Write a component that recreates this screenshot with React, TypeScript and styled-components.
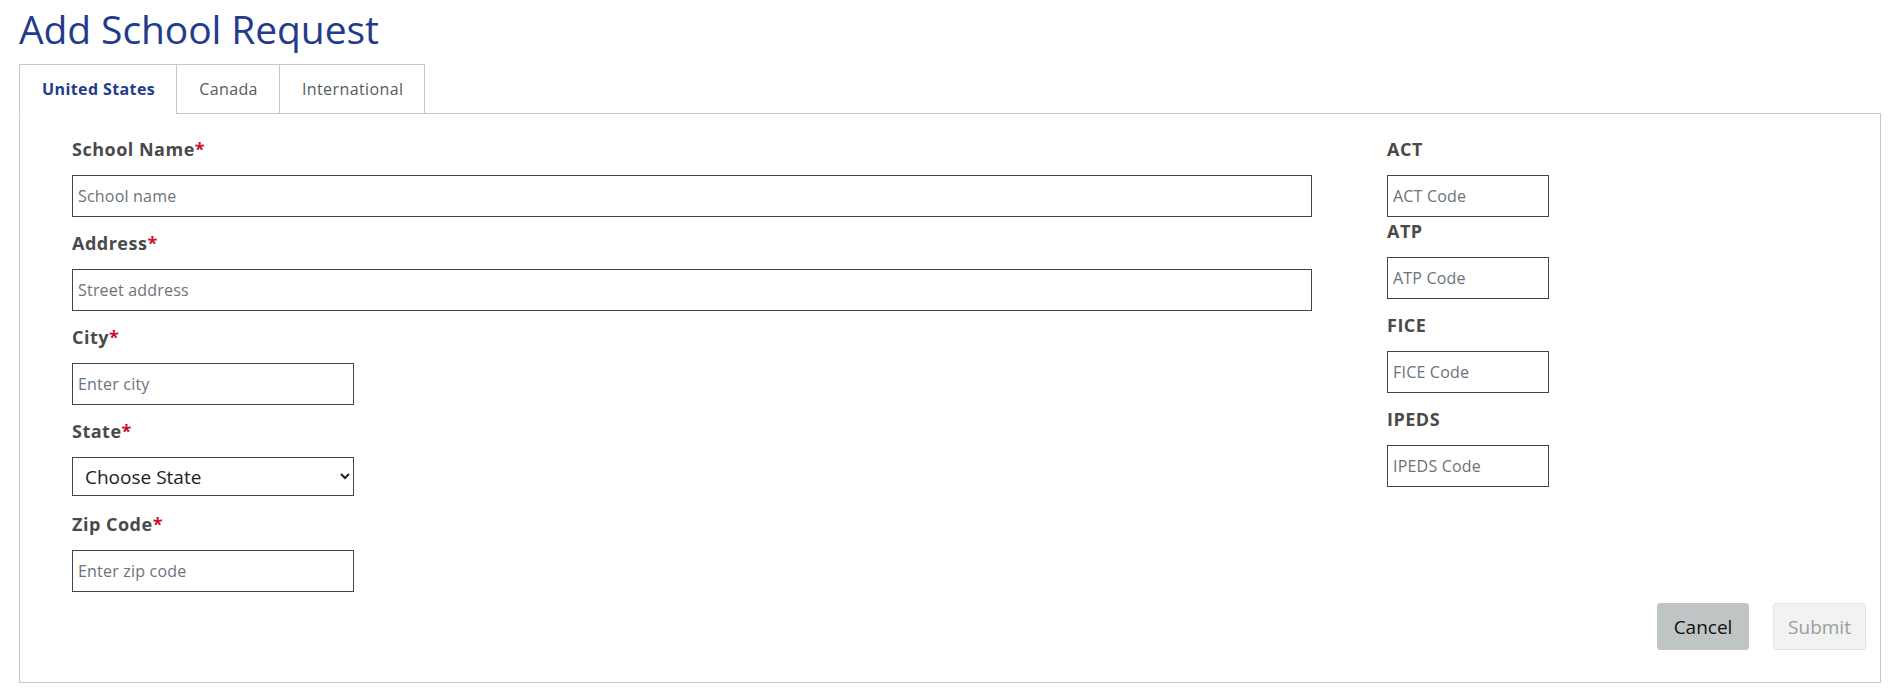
import styled, { createGlobalStyle } from "styled-components";

const GlobalStyle = createGlobalStyle`
  body {
    margin: 0;
    background: #ffffff;
    font-family: "Open Sans", Lato, Arial, sans-serif;
  }
`;

type Field = {
  label: string;
  placeholder: string;
  required?: boolean;
  width?: string;
  gapAfter?: number;
};

const mainFields: Field[] = [
  { label: "School Name", placeholder: "School name", required: true },
  { label: "Address", placeholder: "Street address", required: true },
  { label: "City", placeholder: "Enter city", required: true, width: "282px" },
];

const codeFields: Field[] = [
  { label: "ACT", placeholder: "ACT Code", gapAfter: 3 },
  { label: "ATP", placeholder: "ATP Code" },
  { label: "FICE", placeholder: "FICE Code" },
  { label: "IPEDS", placeholder: "IPEDS Code" },
];

const tabs = ["United States", "Canada", "International"];

function FormField({ field }: { field: Field }) {
  return (
    <Group $gap={field.gapAfter ?? 15}>
      <Label>
        {field.label}
        {field.required && <Star>*</Star>}
      </Label>
      <TextInput type="text" placeholder={field.placeholder} $width={field.width} />
    </Group>
  );
}

export default function App() {
  return (
    <Page>
      <GlobalStyle />
      <Title>Add School Request</Title>
      <TabBar>
        {tabs.map((t, i) => (
          <Tab key={t} $active={i === 0}>
            {t}
          </Tab>
        ))}
        <TabFiller />
      </TabBar>
      <Panel>
        <Columns>
          <Column>
            {mainFields.map((f) => (
              <FormField key={f.label} field={f} />
            ))}
            <Group $gap={17}>
              <Label>
                State<Star>*</Star>
              </Label>
              <StateSelect defaultValue="">
                <option value="">Choose State</option>
              </StateSelect>
            </Group>
            <Group $gap={0}>
              <Label>
                Zip Code<Star>*</Star>
              </Label>
              <TextInput type="text" placeholder="Enter zip code" $width="282px" />
            </Group>
          </Column>
          <Column>
            {codeFields.map((f) => (
              <FormField key={f.label} field={{ ...f, width: "162px" }} />
            ))}
          </Column>
        </Columns>
        <Footer>
          <CancelButton>Cancel</CancelButton>
          <SubmitButton disabled>Submit</SubmitButton>
        </Footer>
      </Panel>
    </Page>
  );
}

const Page = styled.div`
  padding: 0 11px 9px 19px;
`;

const Title = styled.h1`
  margin: 0;
  padding-top: 5px;
  height: 59px;
  font-size: 39px;
  line-height: 47px;
  font-weight: 400;
  letter-spacing: -0.1px;
  color: #243b8c;
`;

const TabBar = styled.div`
  display: flex;
  height: 50px;
`;

const Tab = styled.div<{ $active?: boolean }>`
  display: flex;
  align-items: center;
  padding: 0 21px 0 22px;
  border: 1px solid #c4c8c8;
  border-bottom-color: ${(p) => (p.$active ? "#ffffff" : "#c4c8c8")};
  margin-left: -1px;
  background: #ffffff;
  font-size: 16px;
  letter-spacing: 0.4px;
  font-weight: ${(p) => (p.$active ? 700 : 400)};
  color: ${(p) => (p.$active ? "#243b8c" : "#555a5c")};
  &:first-child {
    margin-left: 0;
  }
`;

const TabFiller = styled.div`
  flex: 1;
  border-bottom: 1px solid #c4c8c8;
`;

const Panel = styled.div`
  border: 1px solid #c4c8c8;
  border-top: none;
  padding: 24px 14px 32px 52px;
`;

const Columns = styled.div`
  display: grid;
  grid-template-columns: 1240px 1fr;
  column-gap: 75px;
`;

const Column = styled.div`
  display: flex;
  flex-direction: column;
`;

const Group = styled.div<{ $gap: number }>`
  display: flex;
  flex-direction: column;
  gap: 15px;
  margin-bottom: ${(p) => p.$gap}px;
`;

const Label = styled.label`
  font-size: 18px;
  line-height: 22px;
  font-weight: 700;
  letter-spacing: 0.5px;
  color: #4a4a4a;
`;

const Star = styled.span`
  color: #c8102e;
`;

const TextInput = styled.input<{ $width?: string }>`
  box-sizing: border-box;
  width: ${(p) => p.$width ?? "100%"};
  height: 42px;
  margin: 0;
  padding: 0 5px;
  border: 1px solid #444444;
  border-radius: 0;
  font-family: "Open Sans", Lato, Arial, sans-serif;
  font-size: 16px;
  letter-spacing: 0.2px;
  color: #333333;
  &::placeholder {
    color: #6b727a;
  }
`;

const StateSelect = styled.select`
  box-sizing: border-box;
  width: 282px;
  height: 39px;
  margin: 0;
  padding: 0 8px;
  border: 1px solid #444444;
  border-radius: 0;
  background: #ffffff;
  font-family: "Open Sans", Lato, Arial, sans-serif;
  font-size: 19px;
  color: #222222;
`;

const Footer = styled.div`
  display: flex;
  justify-content: flex-end;
  gap: 24px;
  padding-top: 11px;
`;

const BaseButton = styled.button`
  height: 47px;
  padding: 0;
  border-radius: 3px;
  font-family: "Open Sans", Lato, Arial, sans-serif;
  font-size: 19px;
`;

const CancelButton = styled(BaseButton)`
  width: 92px;
  border: 1px solid #bfc4c4;
  background: #bfc4c4;
  color: #111111;
`;

const SubmitButton = styled(BaseButton)`
  width: 93px;
  border: 1px solid #e3e5e5;
  background: #f1f2f2;
  color: #9a9c9c;
`;
